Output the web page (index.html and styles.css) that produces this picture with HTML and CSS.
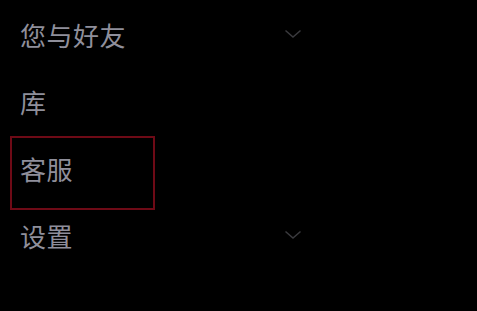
FILE: index.html
```html
<!DOCTYPE html>
<html lang="zh">
<head>
<meta charset="utf-8">
<link rel="stylesheet" href="styles.css">
</head>
<body>
<ul class="menu">
  <li class="item">
    <span class="label">您与好友</span>
    <svg class="chev" width="18" height="10" viewBox="0 0 18 10"><path d="M1.5 1.5 L9 8 L16.5 1.5" fill="none" stroke="#3a3a3e" stroke-width="1.5"/></svg>
  </li>
  <li class="item">
    <span class="label">库</span>
  </li>
  <li class="item focused">
    <span class="label">客服</span>
  </li>
  <li class="item">
    <span class="label">设置</span>
    <svg class="chev" width="18" height="10" viewBox="0 0 18 10"><path d="M1.5 1.5 L9 8 L16.5 1.5" fill="none" stroke="#3a3a3e" stroke-width="1.5"/></svg>
  </li>
</ul>
</body>
</html>
```
FILE: styles.css
```css
html, body {
  margin: 0;
  padding: 0;
  background: #000;
  width: 477px;
  height: 311px;
  overflow: hidden;
}
.menu {
  list-style: none;
  margin: 0;
  padding: 2px 0 0 10px;
  display: flex;
  flex-direction: column;
}
.item {
  position: relative;
  height: 67px;
  width: 292px;
  display: flex;
  align-items: center;
  padding-left: 10px;
  box-sizing: border-box;
}
.label {
  font-family: "Noto Sans CJK SC", "Noto Sans", sans-serif;
  font-size: 26px;
  color: #8f8f9b;
  line-height: 1;
  letter-spacing: 0.5px;
  flex: 1;
  margin-top: -2px;
}
.chev {
  margin-top: -3px;
}
.focused::after {
  content: "";
  position: absolute;
  left: 0;
  top: 0;
  width: 145px;
  height: 74px;
  box-sizing: border-box;
  border: 2px solid #6e0a16;
}
```
